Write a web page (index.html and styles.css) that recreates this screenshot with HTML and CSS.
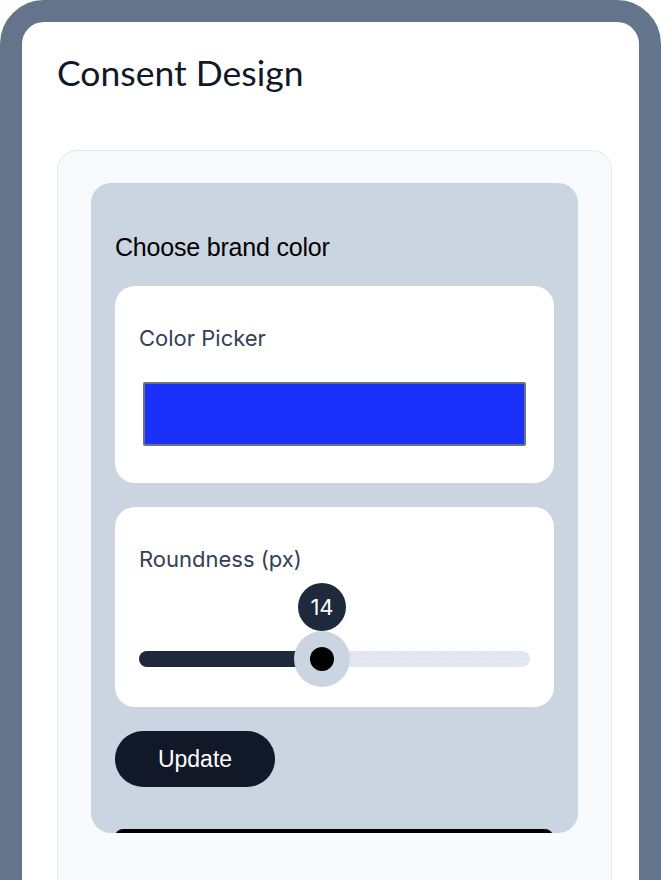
FILE: index.html
```html
<!DOCTYPE html>
<html>
<head>
    <title>Consent Design</title>
    <link rel="stylesheet" href="styles.css">
</head>
<body>
    <div class="frame">
        <h1 class="page-title">Consent Design</h1>
        <div class="outer-card">
            <div class="panel">
                <h2 class="panel-title">Choose brand color</h2>
                <div class="card">
                    <div class="field-label">Color Picker</div>
                    <div class="color-swatch"></div>
                </div>
                <div class="card card-slider">
                    <div class="field-label">Roundness (px)</div>
                    <div class="slider">
                        <div class="slider-value">14</div>
                        <div class="slider-track">
                            <div class="slider-fill" style="width: 47%"></div>
                        </div>
                        <div class="slider-thumb"><div class="slider-dot"></div></div>
                    </div>
                </div>
                <button class="update-button">Update</button>
                <div class="preview-bar"></div>
            </div>
        </div>
    </div>
</body>
</html>
```

FILE: styles.css
```css
body {
    margin: 0;
    padding: 0;
    background-color: #fff;
    font-family: Inter, "Noto Sans", sans-serif;
    overflow: hidden;
}

.frame {
    box-sizing: border-box;
    width: 661px;
    min-height: 1000px;
    border: 22px solid #64748b;
    border-radius: 44px;
    background-color: #fff;
    padding: 29px 27px 0 35px;
}

.page-title {
    font-family: Lato, sans-serif;
    font-size: 35.5px;
    font-weight: 400;
    line-height: 44px;
    color: #111827;
    margin: 0 0 55px 0;
}

.outer-card {
    border: 1px solid #e5e7eb;
    border-radius: 20px;
    background-color: #f8fafc;
    background-image: radial-gradient(#eef1f5 0.6px, transparent 0.6px);
    background-size: 4px 4px;
    padding: 32px 33px 120px 33px;
}

.panel {
    height: 650px;
    box-sizing: border-box;
    overflow: hidden;
    background-color: #cbd5e1;
    border-radius: 20px;
    padding: 48px 24px 0 24px;
}

.panel-title {
    font-family: "Liberation Sans", Arial, sans-serif;
    font-size: 25px;
    font-weight: 400;
    letter-spacing: -0.2px;
    line-height: 32px;
    color: #000;
    margin: 0 0 23px 0;
}

.card {
    background-color: #fff;
    border-radius: 20px;
    padding: 36px 24px 37px 24px;
    margin-bottom: 24px;
}

.field-label {
    font-size: 22px;
    line-height: 32px;
    color: #334155;
}

.color-swatch {
    margin: 28px 4px 0 4px;
    height: 64px;
    box-sizing: border-box;
    border: 2px solid #6b7280;
    border-radius: 2px;
    background-color: #1a30fb;
}

.card-slider {
    padding-bottom: 20px;
}

.slider {
    position: relative;
    height: 104px;
    margin-top: 8px;
}

.slider-value {
    position: absolute;
    top: 0;
    left: 159px;
    width: 48px;
    height: 48px;
    border-radius: 50%;
    background-color: #1e293b;
    color: #fff;
    font-size: 22px;
    line-height: 48px;
    text-align: center;
}

.slider-track {
    position: relative;
    top: 68px;
    height: 16px;
    border-radius: 8px;
    background-color: #e2e8f0;
    background-image: radial-gradient(#d3d9e2 0.6px, transparent 0.6px);
    background-size: 5px 5px;
    overflow: hidden;
}

.slider-fill {
    height: 100%;
    background-color: #1e293b;
}

.slider-thumb {
    position: absolute;
    top: 48px;
    left: 155px;
    width: 56px;
    height: 56px;
    border-radius: 50%;
    background-color: #cbd5e1;
    display: flex;
    align-items: center;
    justify-content: center;
}

.slider-dot {
    width: 24px;
    height: 24px;
    border-radius: 50%;
    background-color: #000;
}

.update-button {
    display: block;
    width: 160px;
    height: 56px;
    border: none;
    border-radius: 28px;
    background-color: #111827;
    color: #fff;
    font-family: "Liberation Sans", Arial, sans-serif;
    font-size: 23px;
    cursor: pointer;
    padding: 0;
}

.preview-bar {
    margin-top: 42px;
    margin-right: 1px;
    height: 60px;
    border-radius: 8px;
    background-color: #000;
}
```
